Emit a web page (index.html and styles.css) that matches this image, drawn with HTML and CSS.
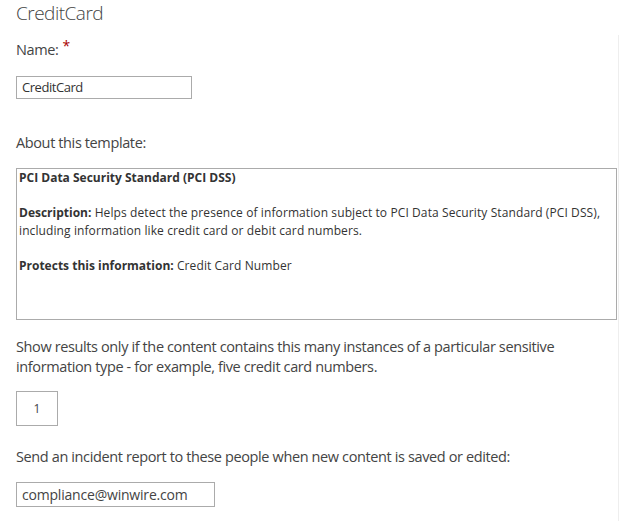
FILE: index.html
```html
<!DOCTYPE html>
<html lang="en">
<head>
<meta charset="utf-8">
<title>CreditCard</title>
<link rel="stylesheet" href="styles.css">
</head>
<body>
<div class="page">
  <h1 class="title">CreditCard</h1>
  <div class="label label-name">Name:<span class="required">*</span></div>
  <div class="textbox textbox-name">CreditCard</div>
  <div class="label label-about">About this template:</div>
  <div class="template-box">
    <div class="tpl-line"><b>PCI Data Security Standard (PCI DSS)</b></div>
    <div class="tpl-blank"></div>
    <div class="tpl-line"><b>Description:</b> Helps detect the presence of information subject to PCI Data Security Standard (PCI DSS), including information like credit card or debit card numbers.</div>
    <div class="tpl-blank"></div>
    <div class="tpl-line"><b>Protects this information:</b> Credit Card Number</div>
  </div>
  <div class="label label-count">Show results only if the content contains this many instances of a particular sensitive information type - for example, five credit card numbers.</div>
  <div class="count-box">1</div>
  <div class="label label-send">Send an incident report to these people when new content is saved or edited:</div>
  <div class="textbox textbox-email">compliance@winwire.com</div>
</div>
</body>
</html>
```
FILE: styles.css
```css
html, body {
  margin: 0;
  padding: 0;
  background: #ffffff;
}

body {
  font-family: "Open Sans", "Noto Sans", sans-serif;
  color: #444444;
}

.page {
  position: relative;
  padding: 0 0 0 16px;
  min-height: 521px;
  box-sizing: border-box;
}

.page::after {
  content: "";
  position: absolute;
  left: 618px;
  top: 35px;
  bottom: 0;
  width: 1px;
  background: #eeeeee;
}

.title {
  margin: 0;
  font-size: 19px;
  line-height: 26px;
  font-weight: 300;
  color: #444444;
  letter-spacing: -0.5px;
}

.label {
  font-size: 14.5px;
  line-height: 20px;
  font-weight: 400;
  color: #444444;
  letter-spacing: -0.38px;
}

.label-name {
  margin-top: 14px;
}

.required {
  display: inline-block;
  margin-left: 4px;
  color: #a80000;
  font-size: 14px;
  line-height: 12px;
  vertical-align: top;
}

.textbox {
  box-sizing: border-box;
  border: 1px solid #ababab;
  padding-left: 5px;
  color: #333333;
  white-space: nowrap;
  overflow: hidden;
}

.textbox-name {
  margin-top: 16px;
  width: 176px;
  height: 23px;
  font-size: 13px;
  line-height: 21px;
  letter-spacing: -0.45px;
}

.label-about {
  margin-top: 34px;
}

.template-box {
  box-sizing: border-box;
  margin-top: 15px;
  width: 601px;
  height: 152px;
  border: 1px solid #ababab;
  padding: 0 4px 0 2px;
  font-size: 12px;
  line-height: 17.5px;
  color: #333333;
  letter-spacing: 0.1px;
}

.template-box b {
  font-weight: 700;
  color: #333333;
  letter-spacing: 0;
}

.tpl-blank {
  height: 17.5px;
}

.label-count {
  margin-top: 17px;
  width: 560px;
}

.count-box {
  box-sizing: border-box;
  margin-top: 14px;
  width: 42px;
  height: 35px;
  border: 1px solid #ababab;
  display: flex;
  align-items: center;
  justify-content: center;
  font-size: 12px;
  color: #444444;
}

.label-send {
  margin-top: 21px;
}

.textbox-email {
  margin-top: 15px;
  width: 199px;
  height: 25px;
  font-size: 14px;
  line-height: 23px;
  color: #444444;
  letter-spacing: -0.2px;
}
```
